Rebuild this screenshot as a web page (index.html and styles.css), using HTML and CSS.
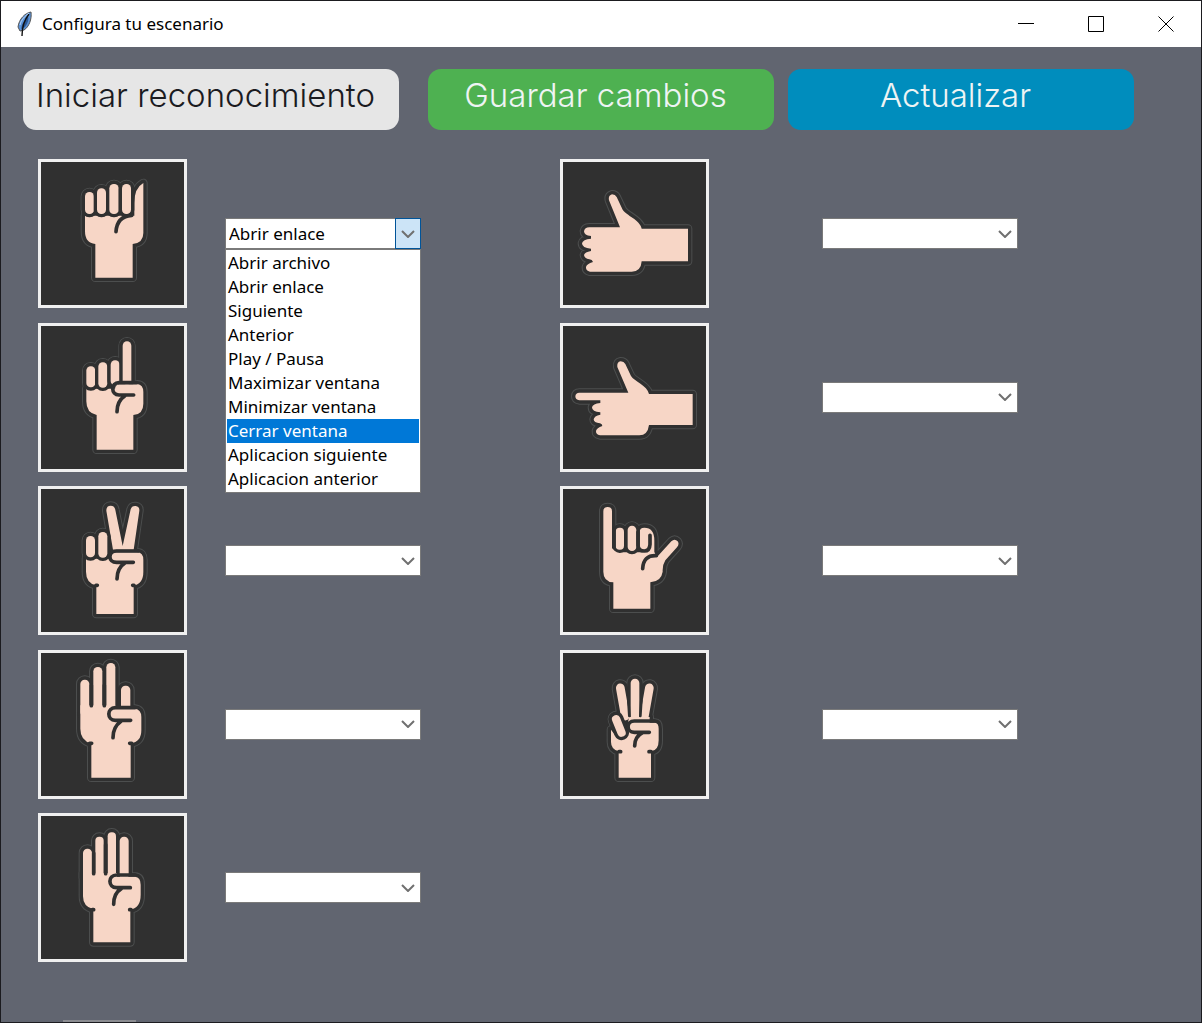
FILE: index.html
```html
<!DOCTYPE html>
<html lang="es">
<head>
<meta charset="utf-8">
<meta name="viewport" content="width=device-width, initial-scale=1">
<title>Configura tu escenario</title>
<link rel="stylesheet" href="styles.css">
</head>
<body>
<div class="window">
  <header class="titlebar">
    <svg class="feather" viewBox="0 0 16 26" aria-hidden="true">
      <path d="M14 1C8 2 2 8 1 16l2 4 4-1c5-3 8-11 7-18z" fill="#5b92d6" stroke="#555" stroke-width="1"/>
      <path d="M11 5C8 8 5 12 4 18l4-2c3-4 4-8 3-11z" fill="#2a5796"/>
      <path d="M12 3C8 8 5 15 5 25" fill="none" stroke="#111" stroke-width="1.4"/>
      <path d="M12 2C8 5 4 9 3 14" fill="none" stroke="#b5d4f7" stroke-width="1"/>
    </svg>
    <h1 class="title">Configura tu escenario</h1>
    <div class="controls">
      <button class="control" type="button" aria-label="Minimizar"><svg viewBox="0 0 16 16"><path d="M0 7.500h16"/></svg></button>
      <button class="control" type="button" aria-label="Maximizar"><svg viewBox="0 0 16 16"><path d="M.5.5h15v15H.5z"/></svg></button>
      <button class="control" type="button" aria-label="Cerrar"><svg viewBox="0 0 16 16"><path d="M.5.5l15 15M15.500.5l-15 15"/></svg></button>
    </div>
  </header>

  <main class="content">
    <div class="toolbar">
      <button class="action action-start" type="button">Iniciar reconocimiento</button>
      <button class="action action-save" type="button">Guardar cambios</button>
      <button class="action action-refresh" type="button">Actualizar</button>
    </div>

    <div class="gestures">
      <label class="card" for="g1" aria-label="Puño">
        <svg viewBox="34 38 429 427">
          <defs>
            <path id="p1" d="M166 198H314V160Q314 115 341 100V250Q341 280 309 283V384H197V283Q166 280 166 245Z"/>
            <g id="f1"><rect x="166" y="127" width="27" height="66" rx="13"/><rect x="202" y="116" width="27" height="77" rx="13"/><rect x="239" y="103" width="28" height="90" rx="13"/><rect x="277" y="103" width="27" height="90" rx="13"/></g>
          </defs>
          <g class="halo"><use href="#p1"/><use href="#f1"/></g><g class="gap"><use href="#p1"/><use href="#f1"/></g>
          <use class="skin" href="#p1"/><use class="finger" href="#f1"/>
          <path class="crease" d="M306 197Q262 200 259 246"/>
        </svg>
      </label>
      <div class="combo combo-open">
        <select id="g1" class="select">
          <option>Abrir archivo</option><option selected>Abrir enlace</option><option>Siguiente</option><option>Anterior</option><option>Play / Pausa</option><option>Maximizar ventana</option><option>Minimizar ventana</option><option>Cerrar ventana</option><option>Aplicacion siguiente</option><option>Aplicacion anterior</option>
        </select>
        <span class="arrow"><svg viewBox="0 0 14 8"><path d="M1 1l6 6 6-6"/></svg></span>
        <ul class="options" role="listbox" aria-label="Acciones">
          <li role="option">Abrir archivo</li>
          <li role="option">Abrir enlace</li>
          <li role="option">Siguiente</li>
          <li role="option">Anterior</li>
          <li role="option">Play / Pausa</li>
          <li role="option">Maximizar ventana</li>
          <li role="option">Minimizar ventana</li>
          <li role="option" class="active" aria-selected="true">Cerrar ventana</li>
          <li role="option">Aplicacion siguiente</li>
          <li role="option">Aplicacion anterior</li>
        </ul>
      </div>

      <label class="card" for="g6" aria-label="Pulgar arriba">
        <svg viewBox="39 38 429 427">
          <defs><path id="p6" d="M118 233H210L177 152Q174 138 186 134Q196 134 200 142L218 180C228 197 270 210 275 237H414V335H275Q273 366 245 366H120Q107 363 108 352Q110 343 129 337Q127 330 118 329Q103 326 102 316Q104 307 123 304V297Q96 295 96 281Q98 269 123 267V259Q102 257 102 245Q104 233 118 233Z"/></defs>
          <use class="halo" href="#p6"/><use class="gap" href="#p6"/><use class="skin" href="#p6"/>
        </svg>
      </label>
      <div class="combo"><select id="g6" class="select"><option></option></select><span class="arrow"><svg viewBox="0 0 14 8"><path d="M1 1l6 6 6-6"/></svg></span></div>

      <label class="card" for="g2" aria-label="Índice arriba">
        <svg viewBox="34 33 429 427">
          <defs>
            <path id="p2" d="M170 220H245V207H322Q341 208 341 230V265Q341 297 311 299V403H201V299Q170 293 170 258Z"/>
            <g id="f2"><rect x="170" y="153" width="27" height="63" rx="13"/><rect x="206" y="141" width="27" height="76" rx="13"/><rect x="243" y="135" width="27" height="75" rx="13"/><rect x="279" y="78" width="26" height="130" rx="13"/></g>
          </defs>
          <g class="halo"><use href="#p2"/><use href="#f2"/></g><g class="gap"><use href="#p2"/><use href="#f2"/></g>
          <use class="skin" href="#p2"/><use class="finger" href="#f2"/>
          <path class="skin" d="M269 207H322Q330 208 334 215V234H269C252 234 252 207 269 207Z"/>
          <path class="crease" d="M320 202H268C243 202 243 239 268 239H312M286 241Q262 257 262 289"/>
        </svg>
      </label>
      <div class="combo"><select id="g2" class="select"><option></option></select></div>

      <label class="card" for="g7" aria-label="Índice a la izquierda">
        <svg viewBox="39 33 429 427">
          <defs><path id="p7" d="M88 232H235L202 155Q200 140 212 138Q222 138 226 146L243 182C252 198 292 210 297 236H428V329H297Q293 360 268 360H150Q137 357 138 347Q140 338 157 332Q157 326 150 324Q131 322 131 312Q132 302 151 298V291Q126 290 126 276Q128 265 151 263V255H88Q76 253 76 243Q77 232 88 232Z"/></defs>
          <use class="halo" href="#p7"/><use class="gap" href="#p7"/><use class="skin" href="#p7"/>
        </svg>
      </label>
      <div class="combo"><select id="g7" class="select"><option></option></select><span class="arrow"><svg viewBox="0 0 14 8"><path d="M1 1l6 6 6-6"/></svg></span></div>

      <label class="card" for="g3" aria-label="Victoria">
        <svg viewBox="34 28 429 427">
          <defs>
            <path id="p3" d="M169 236H240V217H322Q341 217 341 240V275Q341 312 312 316V402H200V316Q169 310 169 275Z"/>
            <g id="f3"><rect x="169" y="168" width="27" height="64" rx="13"/><rect x="206" y="156" width="27" height="77" rx="13"/></g>
            <path id="v3" d="M230 92Q230 77 243 77Q255 77 257 90L279 198L303 88Q306 77 318 78Q330 80 329 92L312 209H250Z"/>
          </defs>
          <g class="halo"><use href="#p3"/><use href="#f3"/><use href="#v3"/></g><g class="gap"><use href="#p3"/><use href="#f3"/><use href="#v3"/></g>
          <use class="skin" href="#p3"/><use class="skin" href="#v3"/><use class="finger" href="#f3"/>
          <path class="crease" d="M326 213H261C234 213 234 247 261 247H311M286 249Q262 264 262 297M199 316H203M309 316H313"/>
        </svg>
      </label>
      <div class="combo"><select id="g3" class="select"><option></option></select><span class="arrow"><svg viewBox="0 0 14 8"><path d="M1 1l6 6 6-6"/></svg></span></div>

      <label class="card" for="g8" aria-label="Meñique y pulgar">
        <svg viewBox="40 28 429 427">
          <defs>
            <path id="p8" d="M161 94Q161 81 174 81Q187 81 187 94V205L210 217H314L322 231L365 184Q375 175 384 184Q390 192 382 202L347 241Q338 255 339 275Q335 304 302 307V386H191V307Q161 305 161 275Z"/>
            <g id="f8"><rect x="198" y="143" width="25" height="66" rx="12"/><rect x="234" y="137" width="26" height="76" rx="13"/></g>
            <path id="k8" d="M270 205V156Q270 143 284 143Q314 143 314 182V222H285Z"/>
          </defs>
          <g class="halo"><use href="#p8"/><use href="#f8"/><use href="#k8"/></g><g class="gap"><use href="#p8"/><use href="#f8"/><use href="#k8"/></g>
          <use class="skin" href="#p8"/><use class="skin" href="#k8"/><use class="finger" href="#f8"/>
          <path class="crease" d="M301 166V193Q300 213 284 213Q266 213 265 196V156M320 227Q281 225 279 266M193 150V200"/>
        </svg>
      </label>
      <div class="combo"><select id="g8" class="select"><option></option></select><span class="arrow"><svg viewBox="0 0 14 8"><path d="M1 1l6 6 6-6"/></svg></span></div>

      <label class="card" for="g4" aria-label="Cuatro dedos, índice doblado">
        <svg viewBox="34 24 429 427">
          <defs>
            <path id="p4" d="M152 180H257V190H315Q335 192 335 215V255Q335 290 303 294V397H185V294Q152 286 152 250Z"/>
            <g id="f4"><rect x="152" y="103" width="27" height="110" rx="13"/><rect x="191" y="65" width="27" height="140" rx="13"/><rect x="230" y="53" width="27" height="145" rx="13"/><rect x="274" y="121" width="28" height="80" rx="13"/></g>
          </defs>
          <g class="halo"><use href="#p4"/><use href="#f4"/></g><g class="gap"><use href="#p4"/><use href="#f4"/></g>
          <use class="skin" href="#p4"/><use class="skin" href="#f4"/>
          <path class="crease" d="M315 187H257C231 187 231 225 257 225H303M274 228Q250 245 250 277M185 120V181M224 120V181M180 294H186M300 294H306"/>
        </svg>
      </label>
      <div class="combo"><select id="g4" class="select"><option></option></select><span class="arrow"><svg viewBox="0 0 14 8"><path d="M1 1l6 6 6-6"/></svg></span></div>

      <label class="card" for="g9" aria-label="Tres dedos">
        <svg viewBox="40 24 429 427">
          <defs>
            <path id="p9" d="M184 253L205 280L228 270L238 215H300V232H315Q327 232 327 250V285Q327 316 304 318V397H207V318Q184 312 184 290Z"/>
            <g id="f9"><rect x="206" y="114" width="26" height="112" rx="13" transform="rotate(-10 219 168)"/><rect x="279" y="114" width="26" height="112" rx="13" transform="rotate(10 292 168)"/><rect x="243" y="100" width="26" height="125" rx="13"/></g>
            <rect id="k9" x="195" y="208" width="25" height="68" rx="12" transform="rotate(-22 207 242)"/>
          </defs>
          <g class="halo"><use href="#p9"/><use href="#f9"/><use href="#k9"/></g><g class="gap"><use href="#p9"/><use href="#f9"/><use href="#k9"/></g>
          <use class="skin" href="#p9"/><use class="skin" href="#f9"/><use class="finger" href="#k9"/>
          <path class="crease" d="M314 227H254C229 227 229 261 254 261H299M279 262Q255 274 255 302M208 319H213M298 319H304"/>
          <path class="crease crease-thin" d="M236 165L239 212M275 165L272 212"/>
        </svg>
      </label>
      <div class="combo"><select id="g9" class="select"><option></option></select><span class="arrow"><svg viewBox="0 0 14 8"><path d="M1 1l6 6 6-6"/></svg></span></div>

      <label class="card" for="g5" aria-label="Cuatro dedos">
        <svg viewBox="34 25 429 427">
          <defs>
            <path id="p5" d="M160 195H262V206H316Q333 207 333 230V260Q333 300 302 304V403H191V304Q160 296 160 265Z"/>
            <g id="f5"><rect x="160" y="122" width="27" height="100" rx="13"/><rect x="197" y="86" width="25" height="130" rx="12"/><rect x="234" y="73" width="25" height="140" rx="12"/><rect x="270" y="86" width="27" height="128" rx="13"/></g>
          </defs>
          <g class="halo"><use href="#p5"/><use href="#f5"/></g><g class="gap"><use href="#p5"/><use href="#f5"/></g>
          <use class="skin" href="#p5"/><use class="skin" href="#f5"/>
          <path class="crease" d="M316 201H261C234 201 234 239 261 239H302M275 242Q252 256 252 289M192 135V197M228 110V197M188 305H192M300 305H304"/>
        </svg>
      </label>
      <div class="combo"><select id="g5" class="select"><option></option></select><span class="arrow"><svg viewBox="0 0 14 8"><path d="M1 1l6 6 6-6"/></svg></span></div>
    </div>
  </main>
  <div class="grip"></div>
</div>
</body>
</html>
```
FILE: styles.css
```css
* {
  box-sizing: border-box;
}

body {
  margin: 0;
  background: #616570;
  color: #000;
  font-family: "Noto Sans", "Open Sans", sans-serif;
}

.window {
  display: flex;
  flex-direction: column;
  min-height: 100vh;
  border: 1px solid #1b1b1f;
}

.titlebar {
  display: flex;
  align-items: center;
  height: 46px;
  padding-left: 16px;
  background: #fff;
}

.feather {
  width: 16px;
  height: 26px;
}

.title {
  flex: 1;
  margin: 0 0 0 9px;
  font-size: 17px;
  font-weight: 400;
  line-height: 24px;
}

.controls {
  display: flex;
}

.control {
  display: grid;
  place-items: center;
  width: 70px;
  height: 46px;
  padding: 0;
  border: 0;
  background: none;
}

.control svg {
  width: 16px;
  height: 16px;
  fill: none;
  stroke: #000;
  stroke-width: 1;
}

.content {
  flex: 1;
  display: flex;
  flex-direction: column;
  gap: 29px;
  padding: 22px 0 58px;
}

.toolbar {
  display: flex;
  gap: 14px;
  padding-left: 22px;
}

.action {
  width: 346px;
  height: 61px;
  padding: 0 11px 9px 0;
  border: 0;
  border-radius: 13px;
  color: #eef4f4;
  font-family: Inter, "Open Sans", sans-serif;
  font-size: 33px;
  font-weight: 300;
  white-space: nowrap;
}

.action-start {
  width: 376px;
  margin-right: 15px;
  background: #e6e6e6;
  color: #1b1b1f;
}

.action-save {
  background: #4eb151;
}

.action-refresh {
  background: #008dbd;
}

.gestures {
  flex: 1;
  display: grid;
  grid-template-columns: 149px 22fr 149px 29fr;
  align-content: space-between;
  align-items: center;
  row-gap: 8px;
  padding-left: 37px;
}

.card {
  display: block;
  height: 149px;
  border: 3px solid #f0f0f0;
  background: #303030;
}

.card svg {
  display: block;
  width: 100%;
  height: 100%;
}

.halo {
  fill: none;
  stroke: #4c4e4e;
  stroke-width: 26;
  stroke-linejoin: round;
}

.gap {
  fill: #303030;
  stroke: #303030;
  stroke-width: 20;
  stroke-linejoin: round;
}

.skin {
  fill: #f7d6c6;
}

.finger {
  fill: #f7d6c6;
  stroke: #303030;
  stroke-width: 20;
  paint-order: stroke;
}

.crease {
  fill: none;
  stroke: #303030;
  stroke-width: 11;
  stroke-linecap: round;
  stroke-linejoin: round;
}

.crease-thin {
  stroke-width: 8;
}

.combo {
  position: relative;
  display: grid;
  grid-template-columns: 170px 26px;
  margin-left: 38px;
}

.card:nth-child(4n + 3) + .combo {
  margin-left: 113px;
}

.select {
  grid-area: 1 / 1 / 2 / 3;
  height: 31px;
  padding: 0 3px;
  border: 1px solid #7a7a7a;
  border-radius: 0;
  background: #fff;
  color: #000;
  font-family: inherit;
  font-size: 17px;
  appearance: none;
}

.arrow {
  grid-area: 1 / 2;
  display: grid;
  place-items: center;
  z-index: 1;
  pointer-events: none;
}

.arrow svg {
  width: 14px;
  height: 8px;
  fill: none;
  stroke: #707070;
  stroke-width: 2;
}

.combo-open .arrow {
  border: 1px solid #005499;
  background: #cce4f7;
}

.options {
  position: absolute;
  top: 100%;
  left: 0;
  z-index: 2;
  width: 196px;
  margin: 0;
  padding: 1px;
  border: 1px solid #7a7a7a;
  background: #fff;
  font-size: 17px;
  line-height: 24px;
  list-style: none;
  white-space: nowrap;
}

.options li {
  padding-left: 1px;
}

.options .active {
  background: #0078d7;
  color: #fff;
}

.grip {
  width: 73px;
  height: 2px;
  margin-left: 62px;
  background: #8b8c91;
}
```
